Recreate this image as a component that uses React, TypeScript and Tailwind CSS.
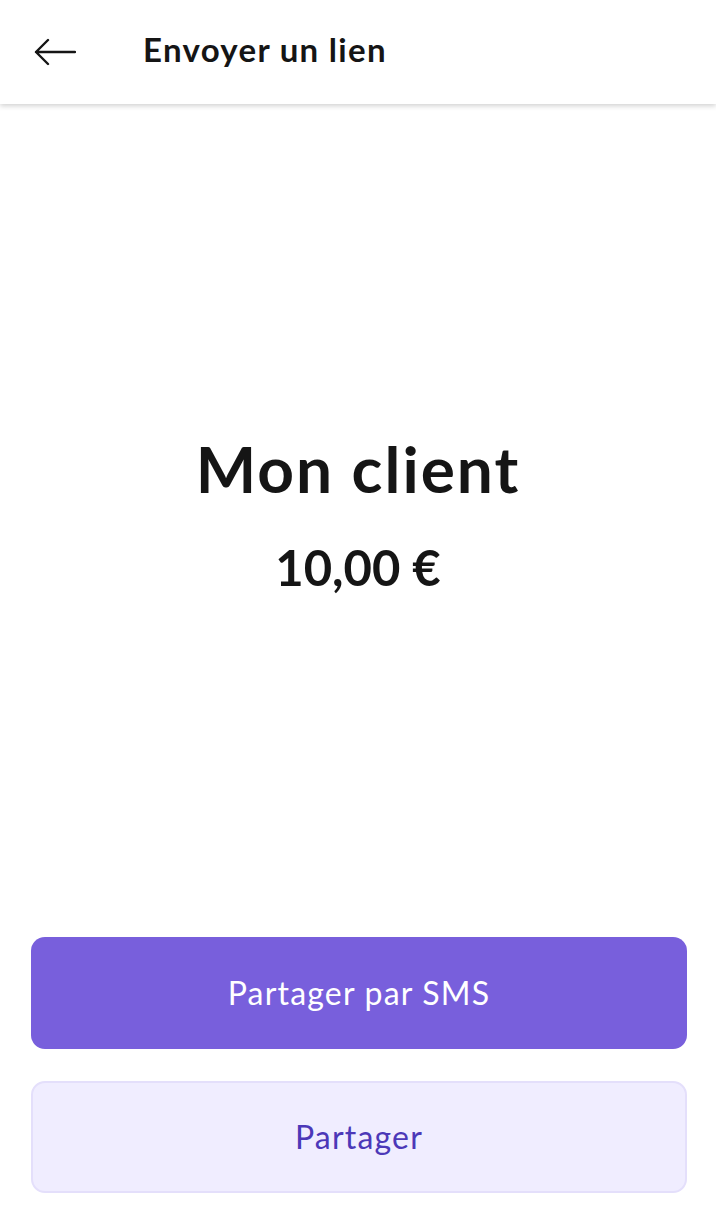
export default function App() {
  return (
    <div
      className="flex flex-col h-[1223px] bg-white text-[#151515]"
      style={{ fontFamily: "Lato, 'Noto Sans', sans-serif" }}
    >
      <header className="flex items-center h-[104px] shrink-0 shadow-[0_2px_5px_rgba(0,0,0,0.18)] relative z-10">
        <button className="ml-[34px] w-[42px] h-[30px] flex items-center justify-center">
          <svg width="42" height="28" viewBox="0 0 42 28" fill="none">
            <path
              d="M41 14H2M14 2L2 14l12 12"
              stroke="#151515"
              strokeWidth="2.4"
              strokeLinecap="round"
              strokeLinejoin="round"
            />
          </svg>
        </button>
        <h1 className="ml-[67px] -mt-[4px] text-[33px] font-bold tracking-[1.3px]">
          Envoyer un lien
        </h1>
      </header>

      <main className="flex-1 flex flex-col items-center justify-center pb-[12px]">
        <h2 className="text-[64px] font-bold leading-none tracking-[2px]">
          Mon client
        </h2>
        <p className="mt-[42px] text-[49px] font-bold leading-none">10,00 €</p>
      </main>

      <div className="flex flex-col gap-[32px] pl-[31px] pr-[29px] pb-[30px]">
        <button className="h-[112px] rounded-[14px] bg-[#785fdc] text-white text-[32px] tracking-[1.2px]">
          Partager par SMS
        </button>
        <button className="h-[112px] rounded-[14px] bg-[#f0edff] border-2 border-[#e4dffb] text-[#4c38b8] text-[32px] tracking-[1.2px]">
          Partager
        </button>
      </div>
    </div>
  );
}
